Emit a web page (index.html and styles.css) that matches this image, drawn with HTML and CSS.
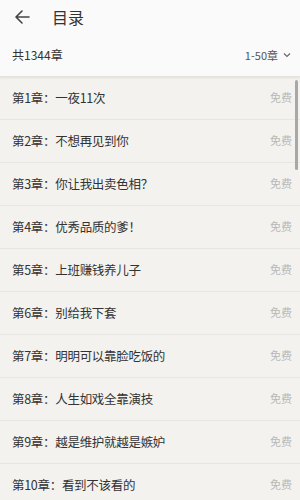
FILE: index.html
```html
<!DOCTYPE html>
<html lang="zh">
<head>
<meta charset="utf-8">
<link rel="stylesheet" href="styles.css">
</head>
<body>
<div class="page">
  <header class="top">
    <div class="bar">
      <svg class="back" width="16" height="14" viewBox="0 0 16 14"><path d="M15 7H2M8 1L2 7l6 6" fill="none" stroke="#444" stroke-width="1.6" stroke-linecap="round" stroke-linejoin="round"/></svg>
      <span class="title">目录</span>
    </div>
    <div class="count">
      <span>共1344章</span>
      <span class="range">1-50章 <svg width="8" height="6" viewBox="0 0 8 6"><path d="M1 1.5l3 3 3-3" fill="none" stroke="#666" stroke-width="1.1"/></svg></span>
    </div>
  </header>
  <ul class="list">
    <li><span>第1章：一夜11次</span><em>免费</em></li>
    <li><span>第2章：不想再见到你</span><em>免费</em></li>
    <li><span>第3章：你让我出卖色相？</span><em>免费</em></li>
    <li><span>第4章：优秀品质的爹！</span><em>免费</em></li>
    <li><span>第5章：上班赚钱养儿子</span><em>免费</em></li>
    <li><span>第6章：别给我下套</span><em>免费</em></li>
    <li><span>第7章：明明可以靠脸吃饭的</span><em>免费</em></li>
    <li><span>第8章：人生如戏全靠演技</span><em>免费</em></li>
    <li><span>第9章：越是维护就越是嫉妒</span><em>免费</em></li>
    <li><span>第10章：看到不该看的</span><em>免费</em></li>
  </ul>
  <div class="scroll"></div>
</div>
</body>
</html>
```
FILE: styles.css
```css
* { box-sizing: border-box; }
html, body { margin: 0; padding: 0; }
body {
  font-family: "Noto Sans CJK SC", "Noto Sans", sans-serif;
  background: #f3f2ef;
  width: 300px;
  height: 500px;
  overflow: hidden;
}
.page { position: relative; height: 500px; overflow: hidden; }
.top {
  background: #fafafa;
  box-shadow: 0 1px 2px rgba(0,0,0,0.08);
  border-bottom: 1px solid #e4e3e0;
}
.bar {
  height: 33px;
  display: flex;
  align-items: center;
  padding-left: 14px;
}
.back { margin-right: 22px; }
.title { font-size: 16px; color: #333; }
.count {
  height: 43px;
  display: flex;
  align-items: center;
  justify-content: space-between;
  padding: 0 9px 0 12px;
  font-size: 12px;
  color: #333;
}
.range { font-size: 11px; color: #555; display: flex; align-items: center; gap: 5px; }
.list { list-style: none; margin: 0; padding: 0; }
.list li {
  height: 43px;
  display: flex;
  align-items: center;
  justify-content: space-between;
  padding: 0 8px 2px 12px;
  border-bottom: 1px solid #e7e6e3;
  font-size: 12.5px;
  letter-spacing: -0.3px;
  color: #333;
}
.list em { font-style: normal; font-size: 11px; letter-spacing: 0; color: #b8b8b6; }
.scroll {
  position: absolute;
  right: 2px;
  top: 80px;
  width: 3px;
  height: 90px;
  background: #a8a8a8;
  border-radius: 2px;
}
```
